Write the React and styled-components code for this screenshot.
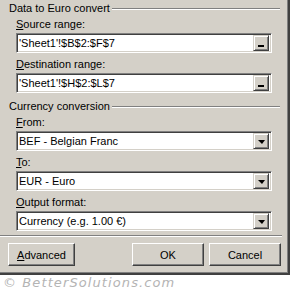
import React from 'react';
import styled, { createGlobalStyle } from 'styled-components';

const GlobalStyle = createGlobalStyle`
    body {
        margin: 0;
        background: #ffffff;
        font-family: "Liberation Sans", Arial, sans-serif;
        font-size: 11px;
    }
`;

export default function App() {
    return (
        <>
            <GlobalStyle />
            <Dialog>
                <Group>
                    <GroupTitle>
                        <span>Data to Euro convert</span>
                        <EtchedLine />
                    </GroupTitle>
                    <GroupBody>
                        <Label><u>S</u>ource range:</Label>
                        <Field>
                            <FieldText>'Sheet1'!$B$2:$F$7</FieldText>
                            <SmallButton><Dash /></SmallButton>
                        </Field>
                        <Label><u>D</u>estination range:</Label>
                        <Field>
                            <FieldText>'Sheet1'!$H$2:$L$7</FieldText>
                            <SmallButton><Dash /></SmallButton>
                        </Field>
                    </GroupBody>
                </Group>

                <Group $top={5}>
                    <GroupTitle $pad={0}>
                        <span>Currency conversion</span>
                        <EtchedLine />
                    </GroupTitle>
                    <GroupBody>
                        <Label><u>F</u>rom:</Label>
                        <Field>
                            <FieldText>BEF - Belgian Franc</FieldText>
                            <SmallButton><Arrow /></SmallButton>
                        </Field>
                        <Label><u>T</u>o:</Label>
                        <Field>
                            <FieldText>EUR - Euro</FieldText>
                            <SmallButton><Arrow /></SmallButton>
                        </Field>
                        <Label><u>O</u>utput format:</Label>
                        <Field>
                            <FieldText>Currency (e.g. 1.00 €)</FieldText>
                            <SmallButton><Arrow /></SmallButton>
                        </Field>
                    </GroupBody>
                </Group>

                <Separator />

                <Footer>
                    <PushButton $w={67}><u>A</u>dvanced</PushButton>
                    <Spacer />
                    <PushButton $w={72}>OK</PushButton>
                    <PushButton $w={72}>Cancel</PushButton>
                </Footer>
            </Dialog>
            <Watermark>© BetterSolutions.com</Watermark>
        </>
    );
}

const Dialog = styled.div`
    width: 288px;
    height: 273px;
    box-sizing: content-box;
    background: #d4d0c8;
    color: #000000;
    border-right: 2px solid #404040;
    border-bottom: 2px solid #404040;
    box-shadow: inset -1px -1px 0 #808080;
    display: flex;
    flex-direction: column;
`;

const Group = styled.div`
    margin-top: ${p => p.$top || 0}px;
    margin-right: 8px;
`;

const GroupTitle = styled.div`
    display: flex;
    align-items: center;
    padding-top: ${p => (p.$pad === undefined ? 2 : p.$pad)}px;
    padding-left: 9px;
    height: 13px;
    line-height: 13px;
    box-sizing: content-box;
    white-space: nowrap;
`;

const EtchedLine = styled.div`
    flex: 1;
    margin-left: 2px;
    margin-top: 1px;
    height: 0;
    border-top: 1px solid #808080;
    border-bottom: 1px solid #ffffff;
`;

const GroupBody = styled.div`
    display: flex;
    flex-direction: column;
    padding: 0 8px 0 16px;
`;

const Label = styled.div`
    line-height: 13px;
    margin-top: 3px;
    margin-bottom: 2px;

    u {
        text-decoration: underline;
        text-underline-offset: 1px;
    }
`;

const Field = styled.div`
    display: flex;
    align-items: center;
    height: 20px;
    box-sizing: border-box;
    background: #ffffff;
    border-top: 1px solid #808080;
    border-left: 1px solid #808080;
    border-right: 1px solid #ffffff;
    border-bottom: 1px solid #ffffff;
    box-shadow: inset 1px 1px 0 #404040, inset -1px -1px 0 #d4d0c8;
    padding: 2px 2px 2px 2px;
    margin-bottom: 2px;

    & + ${Label} {
        margin-top: 3px;
    }
`;

const FieldText = styled.div`
    flex: 1;
    white-space: nowrap;
    overflow: hidden;
`;

const SmallButton = styled.div`
    width: 16px;
    height: 16px;
    box-sizing: border-box;
    background: #d4d0c8;
    border-top: 1px solid #d4d0c8;
    border-left: 1px solid #d4d0c8;
    border-right: 1px solid #404040;
    border-bottom: 1px solid #404040;
    box-shadow: inset 1px 1px 0 #ffffff, inset -1px -1px 0 #808080;
    display: flex;
    align-items: center;
    justify-content: center;
`;

const Dash = styled.div`
    width: 6px;
    height: 2px;
    background: #000000;
    margin-top: 5px;
`;

const Arrow = styled.div`
    width: 0;
    height: 0;
    border-left: 4px solid transparent;
    border-right: 3px solid transparent;
    border-top: 4px solid #000000;
    margin-top: 1px;
`;

const Separator = styled.div`
    margin-top: 2px;
    margin-right: 6px;
    height: 0;
    border-top: 1px solid #808080;
    border-bottom: 1px solid #ffffff;
`;

const Footer = styled.div`
    display: flex;
    gap: 5px;
    margin-top: 6px;
    padding: 0 7px 0 8px;
`;

const Spacer = styled.div`
    flex: 1;
`;

const PushButton = styled.div`
    width: ${p => p.$w}px;
    height: 23px;
    box-sizing: border-box;
    display: flex;
    align-items: center;
    justify-content: center;
    background: #d4d0c8;
    border-top: 1px solid #ffffff;
    border-left: 1px solid #ffffff;
    border-right: 1px solid #404040;
    border-bottom: 1px solid #404040;
    box-shadow: inset -1px -1px 0 #808080;
    font-size: 11px;

    u {
        text-underline-offset: 1px;
    }
`;

const Watermark = styled.div`
    padding: 1px 0 0 3px;
    font-family: "DejaVu Sans", sans-serif;
    font-style: italic;
    font-size: 13px;
    letter-spacing: 1.1px;
    color: #b4b4b4;
    line-height: 14px;
`;
